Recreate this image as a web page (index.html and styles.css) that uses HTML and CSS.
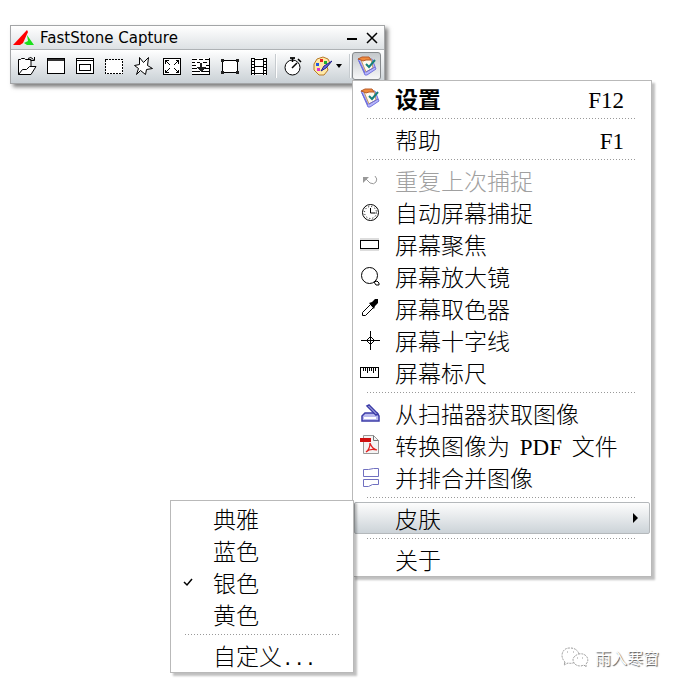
FILE: index.html
```html
<!DOCTYPE html>
<html lang="zh-CN">
<head>
  <meta charset="UTF-8">
  <meta name="viewport" content="width=device-width, initial-scale=1.0">
  <title>FastStone Capture</title>
  <link rel="stylesheet" href="styles.css">
</head>
<body>
  <!-- Ícone compartilhado: 设置 -->
  <svg class="defs" width="0" height="0" aria-hidden="true">
    <symbol id="icon-settings" viewBox="0 0 20 20">
      <g stroke="none">
        <path d="M1 3l7 16 2 0 9-6-4-10z" fill="#b4b4fc" stroke="#7474dc"/>
        <path d="M4 4l10-1 2 9-7 4z" fill="#fffaf0" stroke="#c89a60"/>
        <path d="M1 3l4-2h7l2 3-5 0-3 1-2-1z" fill="#f08a3c" stroke="#b85a28"/>
        <path d="M2 5l6 12M9 16l9-5" stroke="#6868d8" fill="none"/>
        <path d="M9 8l3 3 6-7" stroke="#16807c" stroke-width="2" fill="none"/>
      </g>
    </symbol>
  </svg>

  <div class="window">
    <div class="titlebar">
      <svg class="logo" width="22" height="16" viewBox="0 0 22 16">
        <path d="M0 15L14 0l1 2-5 11-3 2z" fill="#f00"/>
        <path d="M14 5l7 10h-7l-3-2 4-2z" fill="#1be01b"/>
      </svg>
      <span class="title">FastStone Capture</span>
      <button class="win-btn" aria-label="最小化">
        <svg width="12" height="12" viewBox="0 0 12 12"><path d="M1 7h10" stroke="#000" stroke-width="2"/></svg>
      </button>
      <button class="win-btn" aria-label="关闭">
        <svg width="12" height="12" viewBox="0 0 12 12"><path d="M1 1l10 10M11 1L1 11" stroke="#000" stroke-width="1.5"/></svg>
      </button>
    </div>

    <div class="toolbar">
      <button class="tool" aria-label="打开">
        <svg class="icon smooth" viewBox="0 0 20 20"><path class="paper" d="M1.500 18.500v-15h2l1-1h3l1 1h5.500v7h5l-5 8z"/><path d="M1.500 18.500l4-5h4l3-3h2M11 2.500q3-2.500 5.500 1M17.500 1v3.500h-4"/></svg>
      </button>
      <button class="tool" aria-label="捕捉活动窗口">
        <svg class="icon" viewBox="0 0 20 20"><path class="paper" d="M1.500 2.500h17v15h-17z"/><path d="M2 3h16v2H2z" fill="#333"/></svg>
      </button>
      <button class="tool" aria-label="捕捉窗口/对象">
        <svg class="icon" viewBox="0 0 20 20"><path class="paper" d="M1.500 2.500h17v15h-17z"/><path d="M2 4.500h16M4.500 8.500h11v6h-11z"/></svg>
      </button>
      <button class="tool" aria-label="捕捉矩形区域">
        <svg class="icon" viewBox="0 0 20 20"><path class="paper" stroke-dasharray="2 1" d="M1.500 3.500h17v14h-17z"/></svg>
      </button>
      <button class="tool" aria-label="捕捉手绘区域">
        <svg class="icon smooth" viewBox="0 0 20 20"><path class="paper" d="M6.500 1.500l4 5 5-5-1 8 5 3-6 1-1 5-5-4-4 4 2-6-4-3 5-1z"/></svg>
      </button>
      <button class="tool" aria-label="捕捉整个屏幕">
        <svg class="icon" viewBox="0 0 20 20"><path class="paper" d="M1.500 2.500h17v16h-17z"/><path d="M3.500 7.500v-3h3M13.500 4.500h3v3M16.500 13.500v3h-3M6.500 16.500h-3v-3M4 5l4 4M16 5l-4 4M4 16l4-4M16 16l-4-4"/></svg>
      </button>
      <button class="tool" aria-label="捕捉滚动窗口">
        <svg class="icon" viewBox="0 0 20 20"><path class="paper" stroke="none" d="M1 2h18v17H1z"/><path d="M1 3.500h5M8 3.500h4M14 3.500h5M1 6.500h3M6 6.500h3M12 6.500h4M1 9.500h4M15 9.500h4M1 12.500h5M14 12.500h4M1 15.500h8M11 15.500h7M1 18.500h18M18.500 2v17"/><path d="M9 7h2v4h4l-5 5-5-5h4z" fill="#222"/></svg>
      </button>
      <button class="tool" aria-label="捕捉固定区域">
        <svg class="icon" viewBox="0 0 20 20"><path class="paper" d="M2.500 4.500h15v12h-15z"/><path d="M1 3h3v3H1zM16 3h3v3h-3zM1 15h3v3H1zM16 15h3v3h-3z" fill="#222"/></svg>
      </button>
      <button class="tool" aria-label="屏幕录像机">
        <svg class="icon" viewBox="0 0 20 20"><path d="M3 2h14v17H3z" fill="#fff"/><path d="M4 2v17M16 2v17" stroke-width="4"/><path d="M6 3.500h8M6 10.500h8M6 17.500h8"/><path d="M4 3v16M16 3v16" stroke="#fff" stroke-width="2" stroke-dasharray="2 1"/></svg>
      </button>
      <span class="divider"></span>
      <button class="tool" aria-label="延时捕捉">
        <svg class="icon smooth" viewBox="0 0 20 20"><circle class="paper" cx="9.500" cy="11.500" r="7.500"/><path d="M7 1h5v2H7z" fill="#222"/><path d="M9.500 2v4M9 12l5-5M15 3l3 3" stroke-width="1.500"/></svg>
      </button>
      <button class="tool tool-drop" aria-label="输出">
        <svg class="icon smooth" viewBox="0 0 20 20">
          <path d="M5 3l6-2 5 2 2 4-3 4 1 3-4 5H7l-5-5V8z" fill="#ffe9a8" stroke="#b87a28"/>
          <path d="M4 7h3v3H4z" fill="#2058e0"/><path d="M8 3h3v3H8z" fill="#e82020"/>
          <path d="M12 5h3v3h-3z" fill="#20b030"/><path d="M5 12h3v3H5z" fill="#e030d0"/>
          <path d="M9 15l3-5 8-5-6 7z" fill="#6868e0" stroke="#222290"/>
        </svg>
        <svg width="6" height="4" viewBox="0 0 6 4"><path d="M0 0h6L3 4z"/></svg>
      </button>
      <span class="divider"></span>
      <button class="tool active" aria-label="设置" aria-expanded="true">
        <svg class="icon smooth"><use href="#icon-settings"/></svg>
      </button>
    </div>

    <ul class="menu main-menu">
      <li><button class="item bold"><svg class="icon smooth"><use href="#icon-settings"/></svg><span>设置</span><kbd>F12</kbd></button></li>
      <li class="sep"></li>
      <li><button class="item"><i class="icon"></i><span>帮助</span><kbd>F1</kbd></button></li>
      <li class="sep"></li>
      <li><button class="item" disabled>
        <svg class="icon smooth" viewBox="0 0 20 20"><path stroke="#999" d="M5 8l5 5q4 2 6-1t-1-6"/><path d="M3 7h6l-6 6z" fill="#999"/></svg>
        <span>重复上次捕捉</span></button></li>
      <li><button class="item">
        <svg class="icon smooth" viewBox="0 0 20 20"><circle class="paper" cx="10.500" cy="10.500" r="8"/><path d="M10.500 6v5h5"/><circle cx="10.500" cy="10.500" r="6" stroke-dasharray="1 2.140"/></svg>
        <span>自动屏幕捕捉</span></button></li>
      <li><button class="item">
        <svg class="icon" viewBox="0 0 20 20"><path d="M0 4h19v2H0zM0 15h19v2H0z" fill="#ddd"/><path class="paper" d="M.5 6.500h18v8H.5z"/></svg>
        <span>屏幕聚焦</span></button></li>
      <li><button class="item">
        <svg class="icon smooth" viewBox="0 0 20 20"><circle class="paper" cx="9.500" cy="9.500" r="8"/><path class="paper" d="M14 16l3-1 2 2v2h-3z"/></svg>
        <span>屏幕放大镜</span></button></li>
      <li><button class="item">
        <svg class="icon smooth" viewBox="0 0 20 20"><path class="paper" d="M2.500 17.500v-3l8-8 3 3-8 8z"/><path d="M9 5l3-1 3-3h3v4l-3 3-1 3z" fill="#000"/></svg>
        <span>屏幕取色器</span></button></li>
      <li><button class="item">
        <svg class="icon" viewBox="0 0 20 20"><path d="M10.500 6.500l4 4-4 4-4-4z"/><path d="M1 10.500h19M10.500 1v19"/></svg>
        <span>屏幕十字线</span></button></li>
      <li><button class="item">
        <svg class="icon" viewBox="0 0 20 20"><path class="paper" d="M.5 5.500h18v10H.5z"/><path d="M3.500 6v3M5.500 6v3M7.500 6v5M9.500 6v3M11.500 6v3M13.500 6v5M15.500 6v3"/></svg>
        <span>屏幕标尺</span></button></li>
      <li class="sep"></li>
      <li><button class="item">
        <svg class="icon smooth" viewBox="0 0 20 20"><path d="M2 13l3-3h12l2 3v5H2z" fill="#b9b9ee" stroke="#3c3ca8" stroke-width="1.500"/><path d="M4 15h12" stroke="#fff" stroke-width="2"/><path d="M7 3l2-1 9 9-2 1z" fill="#ddddfa" stroke="#3c3ca8" stroke-width="1.500"/></svg>
        <span>从扫描器获取图像</span></button></li>
      <li><button class="item">
        <svg class="icon smooth" viewBox="0 0 20 20"><path d="M3.500.5h10l5 5v13h-15z" fill="#f4f4f4" stroke="#999"/><path d="M13.500.5v5h5" stroke="#777"/><path d="M0 3h11v4H0z" fill="#d01010"/><path d="M10 8q0 6-4 9 4-4 11-2-5-1-7-7" stroke="#e02020" stroke-width="1.200"/></svg>
        <span>转换图像为 <span class="latin">PDF</span> 文件</span></button></li>
      <li><button class="item">
        <svg class="icon smooth" viewBox="0 0 20 20"><path stroke="#7070c0" d="M3.500 2.500h5l5-1h5v8h-15zM3.500 12.500h15v5h-6l-4 2h-5z"/></svg>
        <span>并排合并图像</span></button></li>
      <li class="sep"></li>
      <li class="has-sub">
        <button class="item selected" aria-expanded="true"><i class="icon"></i><span>皮肤</span>
          <svg class="arrow" width="5" height="10" viewBox="0 0 5 10"><path d="M0 0l5 5-5 5z"/></svg></button>
        <ul class="menu sub-menu">
          <li><button class="item"><i class="icon"></i><span>典雅</span></button></li>
          <li><button class="item"><i class="icon"></i><span>蓝色</span></button></li>
          <li><button class="item">
            <svg class="icon smooth" viewBox="0 0 20 20"><path stroke-width="1.500" d="M6 10l3 3 5-6"/></svg>
            <span>银色</span></button></li>
          <li><button class="item"><i class="icon"></i><span>黄色</span></button></li>
          <li class="sep"></li>
          <li><button class="item"><i class="icon"></i><span>自定义<b class="dots">...</b></span></button></li>
        </ul>
      </li>
      <li class="sep"></li>
      <li><button class="item"><i class="icon"></i><span>关于</span></button></li>
    </ul>
  </div>

  <div class="watermark">
    <svg width="28" height="22" viewBox="0 0 28 22">
      <path d="M4 16l-1 3 4-2q4 1 7-1 5-3 4-8-2-6-9-6T1 9q0 4 3 7z"/>
      <path d="M23 19l2 2 0-3q3-3 1-7-3-4-8-3-6 2-6 6 1 6 8 6z"/>
      <path d="M6 6h1M12 6h1M16 12h1M21 12h1"/>
    </svg>
    <span>雨入寒窗</span>
  </div>
</body>
</html>
```
FILE: styles.css
```css
body {
  box-sizing: border-box;
  min-height: 100vh;
  margin: 0;
  padding: 25px 10px;
  background: #fff;
  font-family: "Liberation Serif", "Noto Sans CJK SC", serif;
  color: #000;
}
button {
  margin: 0;
  padding: 0;
  border: 0;
  background: none;
  font: inherit;
  color: inherit;
}
svg { display: block; }
.defs { position: absolute; }

/* Janela */
.window {
  position: relative;
  width: max-content;
  border: 1px solid #a3a5a7;
  background: #fff;
  box-shadow: 3px 3px 4px rgba(0,0,0,0.5);
}
.titlebar {
  display: flex;
  align-items: center;
  height: 23px;
  padding: 0 2px;
  border-bottom: 1px solid #aeb2b5;
  background: linear-gradient(#fff, #dde1e4);
}
.title {
  flex: 1;
  margin-left: 5px;
  font: 15px "DejaVu Sans", sans-serif;
}
.win-btn {
  display: flex;
  align-items: center;
  justify-content: center;
  width: 20px;
  height: 20px;
}
.toolbar {
  display: flex;
  align-items: center;
  height: 32px;
  padding: 0 3px 1px 1px;
  background: linear-gradient(#fff, #c9d0d5);
}
.tool {
  display: flex;
  align-items: center;
  justify-content: center;
  width: 29px;
  height: 28px;
}
.tool-drop {
  width: 40px;
  gap: 4px;
}
.tool.active {
  box-sizing: border-box;
  border: 1px solid #85898c;
  border-radius: 3px;
  background: linear-gradient(#c4c8cb, #f6f7f8);
}
.divider {
  box-sizing: border-box;
  width: 2px;
  height: 24px;
  margin: 0 1px 0 2px;
  border-left: 1px solid #c6cbcf;
  background: #fff;
}

/* Ícones */
.icon {
  flex: none;
  width: 20px;
  height: 20px;
  fill: none;
  stroke: #000;
  shape-rendering: crispEdges;
}
.icon path[fill]:not([stroke]) { stroke: none; }
.icon.smooth { shape-rendering: auto; }
.paper { fill: #fff; }

/* Menus */
.menu {
  position: absolute;
  box-sizing: border-box;
  margin: 0;
  padding: 1px;
  list-style: none;
  border: 1px solid #b9b9b9;
  background: #fff;
  box-shadow: 3px 3px 2px rgba(0,0,0,0.25);
  font-size: 23px;
  font-weight: 300;
}
.main-menu {
  top: 54px;
  left: 341px;
  width: 300px;
}
.sub-menu {
  top: -2px;
  right: 100%;
  width: 184px;
}
.has-sub { position: relative; }
.item {
  display: flex;
  align-items: center;
  box-sizing: border-box;
  width: 100%;
  height: 32px;
  padding: 0 26px 0 6px;
  line-height: 32px;
  white-space: nowrap;
  text-align: left;
}
.item > span {
  flex: 1;
  margin-left: 15px;
}
.item > span,
.item kbd { padding-top: 6px; }
.item kbd { font: inherit; font-weight: normal; }
.item.bold { font-weight: bold; }
.item:disabled { color: #a0a0a0; }
.item.selected {
  padding: 0 11px 0 5px;
  border: 1px solid #b4b8bb;
  border-radius: 2px;
  background: linear-gradient(#fdfdfd, #ccd3d8);
}
.arrow { fill: #000; }
.sep {
  height: 1px;
  margin: 4px 13px;
  background: repeating-linear-gradient(90deg, #999 0 1px, #fff 1px 3px);
}
.latin { margin: 0 4px; }
.dots { font: 19px "Liberation Mono", monospace; }

.watermark {
  position: absolute;
  right: 20px;
  bottom: 18px;
  display: flex;
  align-items: center;
  gap: 6px;
  font: 16px "Noto Sans CJK SC", sans-serif;
  color: #fff;
  text-shadow: 1px 1px 1px #555;
}
.watermark svg {
  fill: #fff;
  stroke: #999;
  stroke-dasharray: 2 1;
}
```
